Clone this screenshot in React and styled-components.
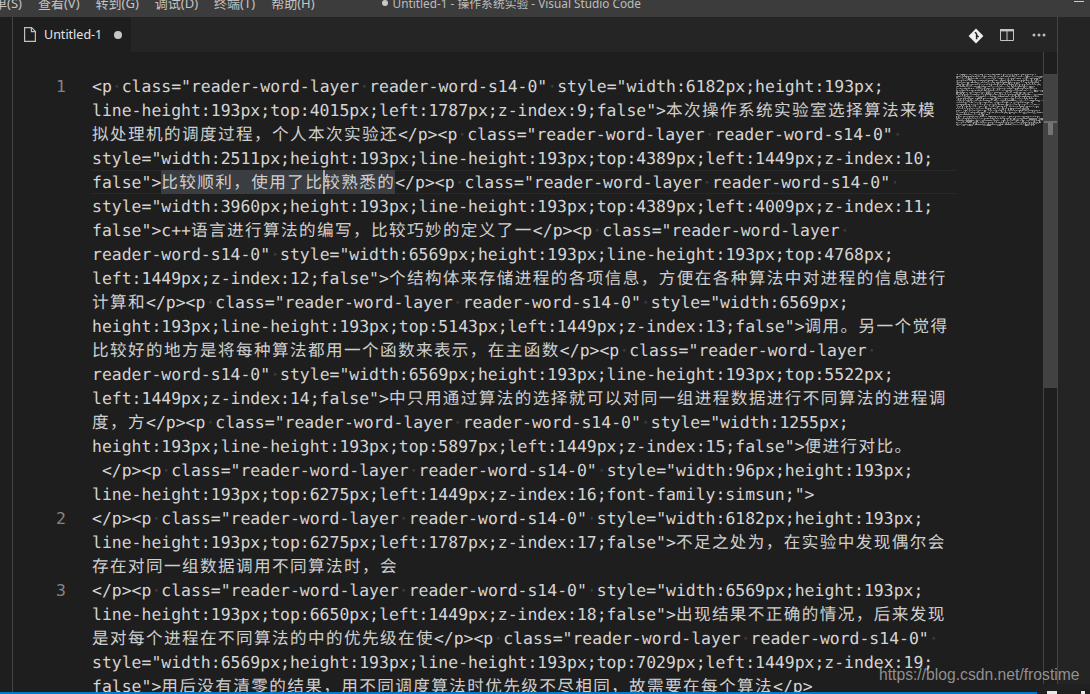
import React from "react";
import styled, { createGlobalStyle } from "styled-components";

const Global = createGlobalStyle`
  html, body { margin: 0; padding: 0; background: #1e1e1e; overflow: hidden; }
  #root { width: 1090px; height: 694px; }
`;

const CODE = [
  [1, `<p class="reader-word-layer reader-word-s14-0" style="width:6182px;height:193px;`],
  [0, `line-height:193px;top:4015px;left:1787px;z-index:9;false">本次操作系统实验室选择算法来模`],
  [0, `拟处理机的调度过程，个人本次实验还</p><p class="reader-word-layer reader-word-s14-0" `],
  [0, `style="width:2511px;height:193px;line-height:193px;top:4389px;left:1449px;z-index:10;`],
  [0, `false">§</p><p class="reader-word-layer reader-word-s14-0" `],
  [0, `style="width:3960px;height:193px;line-height:193px;top:4389px;left:4009px;z-index:11;`],
  [0, `false">c++语言进行算法的编写，比较巧妙的定义了一</p><p class="reader-word-layer `],
  [0, `reader-word-s14-0" style="width:6569px;height:193px;line-height:193px;top:4768px;`],
  [0, `left:1449px;z-index:12;false">个结构体来存储进程的各项信息，方便在各种算法中对进程的信息进行`],
  [0, `计算和</p><p class="reader-word-layer reader-word-s14-0" style="width:6569px;`],
  [0, `height:193px;line-height:193px;top:5143px;left:1449px;z-index:13;false">调用。另一个觉得`],
  [0, `比较好的地方是将每种算法都用一个函数来表示，在主函数</p><p class="reader-word-layer `],
  [0, `reader-word-s14-0" style="width:6569px;height:193px;line-height:193px;top:5522px;`],
  [0, `left:1449px;z-index:14;false">中只用通过算法的选择就可以对同一组进程数据进行不同算法的进程调`],
  [0, `度，方</p><p class="reader-word-layer reader-word-s14-0" style="width:1255px;`],
  [0, `height:193px;line-height:193px;top:5897px;left:1449px;z-index:15;false">便进行对比。`],
  [0, `\u00a0</p><p class="reader-word-layer reader-word-s14-0" style="width:96px;height:193px;`],
  [0, `line-height:193px;top:6275px;left:1449px;z-index:16;font-family:simsun;">`],
  [2, `</p><p class="reader-word-layer reader-word-s14-0" style="width:6182px;height:193px;`],
  [0, `line-height:193px;top:6275px;left:1787px;z-index:17;false">不足之处为，在实验中发现偶尔会`],
  [0, `存在对同一组数据调用不同算法时，会`],
  [3, `</p><p class="reader-word-layer reader-word-s14-0" style="width:6569px;height:193px;`],
  [0, `line-height:193px;top:6650px;left:1449px;z-index:18;false">出现结果不正确的情况，后来发现`],
  [0, `是对每个进程在不同算法的中的优先级在使</p><p class="reader-word-layer reader-word-s14-0" `],
  [0, `style="width:6569px;height:193px;line-height:193px;top:7029px;left:1449px;z-index:19;`],
  [0, `false">用后没有清零的结果，用不同调度算法时优先级不尽相同，故需要在每个算法</p>`],
];

const SELECT_A = "比较顺利，使用了比";
const SELECT_B = "较熟悉的";
const MENU = ["单(S)", "查看(V)", "转到(G)", "调试(D)", "终端(T)", "帮助(H)"];

const Root = styled.div`
  position: relative;
  width: 1090px;
  height: 694px;
  display: flex;
  flex-direction: column;
  overflow: hidden;
  background: #1e1e1e;
`;
const TitleBar = styled.div`
  height: 17px;
  flex: none;
  background: #3c3c3c;
  overflow: hidden;
`;
const TitleRow = styled.div`
  height: 5px;
  margin-left: -6px;
  display: flex;
  align-items: center;
  gap: 16px;
  color: #c4c4c4;
  font: 13px "Noto Sans", "Noto Sans CJK SC", sans-serif;
  white-space: nowrap;
`;
const WindowTitle = styled.span`
  margin-left: 51px;
  display: flex;
  align-items: center;
  gap: 5px;
  color: #bdbdbd;
  font-size: 11.8px;
`;
const TitleDot = styled.i`
  width: 6px;
  height: 6px;
  border-radius: 50%;
  background: #c8c8c8;
`;
const WindowControl = styled.span`
  position: absolute;
  right: 6px;
  top: 1px;
  width: 10px;
  height: 1px;
  background: #cccccc;
`;
const Main = styled.div`
  flex: 1;
  min-height: 0;
  display: flex;
`;
const LeftRail = styled.div`
  width: 12px;
  flex: none;
  background: #1e1e1e;
  border-right: 1px solid #444444;
`;
const EditorGroup = styled.div`
  width: 1044px;
  flex: none;
  display: flex;
  flex-direction: column;
  min-height: 0;
`;
const RightRail = styled.div`
  flex: 1;
  background: #242424;
  border-left: 1px solid #444444;
`;
const TabBar = styled.div`
  height: 35px;
  flex: none;
  display: flex;
  align-items: stretch;
  background: #252526;
`;
const Tab = styled.div`
  width: 118px;
  display: flex;
  align-items: center;
  padding-left: 11px;
  box-sizing: border-box;
  background: #1e1e1e;
  color: #e4e4e4;
  font: 12.5px "Noto Sans", sans-serif;
`;
const TabLabel = styled.span`
  margin-left: 8px;
`;
const DirtyDot = styled.span`
  width: 8px;
  height: 8px;
  border-radius: 50%;
  background: #c6c6c6;
  margin-left: 12px;
`;
const TabActions = styled.div`
  margin-left: auto;
  width: 96px;
  display: flex;
  align-items: center;
  padding-left: 7px;
  gap: 16px;
  box-sizing: border-box;
`;
const IconSlot = styled.span`
  display: flex;
  margin-top: ${(p) => p.$dy || 0}px;
  margin-left: ${(p) => p.$dx || 0}px;
`;
const Editor = styled.div`
  flex: 1;
  min-height: 0;
  display: flex;
  overflow: hidden;
`;
const Gutter = styled.div`
  width: 53px;
  flex: none;
  padding: 22px 26px 0 0;
  text-align: right;
  color: #858585;
  font: 16.44px/26px "DejaVu Sans Mono", monospace;
`;
const LineNo = styled.div`
  height: 24px;
`;
const Code = styled.div`
  width: 864px;
  flex: none;
  padding-top: 22px;
  color: #d4d4d4;
  font: 16.44px/26px "DejaVu Sans Mono", monospace;
  text-rendering: geometricPrecision;
`;
const Line = styled.div`
  height: 24px;
  white-space: pre;
  box-sizing: border-box;
  box-shadow: ${(p) => (p.$active ? "inset 0 1px 0 #282828, inset 0 -1px 0 #282828" : "none")};
`;
const Cjk = styled.span`
  font-family: "Noto Sans CJK SC", sans-serif;
  font-size: 16.6px;
  line-height: 0;
  letter-spacing: 1.4px;
  font-weight: 400;
  color: #cfcfcf;
`;
const Ws = styled.span`
  color: #3f3f3f;
`;
const Selection = styled.span`
  position: relative;
  display: inline-block;
  height: 24px;
  vertical-align: top;
  background: #3a3d41;
`;
const Caret = styled.i`
  position: absolute;
  top: 0;
  left: 162px;
  width: 2px;
  height: 24px;
  background: #aeafad;
`;
const Minimap = styled.div`
  width: 87px;
  flex: none;
  padding-top: 22px;
`;
const Scrollbar = styled.div`
  width: 13px;
  flex: none;
  border-left: 1px solid #444444;
  padding-top: 22px;
`;
const Thumb = styled.div`
  position: relative;
  height: 314px;
  background: #424242;
`;
const OverviewLine = styled.div`
  position: absolute;
  top: 47px;
  left: 0;
  right: 0;
  height: 2px;
  background: #6e6e6e;
`;
const OverviewCursor = styled.div`
  position: absolute;
  top: 49px;
  left: 4px;
  width: 5px;
  height: 12px;
  background: #747474;
`;
const StatusBar = styled.div`
  height: 2px;
  flex: none;
  background: #007acc;
`;
const Watermark = styled.div`
  position: absolute;
  left: 879px;
  top: 665px;
  color: rgba(190, 190, 190, 0.72);
  font: 15.7px/20px "Liberation Sans", sans-serif;
  white-space: nowrap;
`;
const CornerWidget = styled.div`
  position: absolute;
  right: 0;
  bottom: 0;
  width: 53px;
  height: 10px;
  background: #202020;
  border-top-left-radius: 4px;
`;
const CornerMark = styled.span`
  position: absolute;
  bottom: 0;
  left: ${(p) => p.$x}px;
  width: ${(p) => p.$w}px;
  height: 3px;
  background: #e8e8e8;
`;

function runs(text) {
  const parts = text.match(/[\u3000-\u9fff\uff00-\uffef]+| |[^ \u3000-\u9fff\uff00-\uffef]+/g) || [];
  return parts.map((p, i) => {
    if (p === " ") return <Ws key={i}>·</Ws>;
    if (/^[\u3000-\u9fff\uff00-\uffef]/.test(p)) return <Cjk key={i}>{p}</Cjk>;
    return <React.Fragment key={i}>{p}</React.Fragment>;
  });
}

function SelectedRun() {
  return (
    <Selection>
      <Cjk>{SELECT_A}</Cjk>
      <Caret />
      <Cjk>{SELECT_B}</Cjk>
    </Selection>
  );
}

function CodeLine({ text }) {
  if (!text.includes("§")) return <Line>{runs(text)}</Line>;
  const [a, b] = text.split("§");
  return (
    <Line $active>
      {runs(a)}
      <SelectedRun />
      {runs(b)}
    </Line>
  );
}

function MinimapArt() {
  const rects = [];
  CODE.forEach(([, raw], row) => {
    const text = raw.replace("§", SELECT_A + SELECT_B);
    let x = 0;
    for (let i = 0; i < text.length; i++) {
      const c = text.charCodeAt(i);
      const wide = c >= 0x3000;
      const w = wide ? 2 : 1;
      if (c !== 32 && c !== 160) {
        const seed = (c * 31 + i * 17 + row * 13) % 97;
        const v = 55 + (seed % 110);
        rects.push(
          <rect key={`${row}-${i}`} x={x} y={row * 2} width={w} height={seed % 3 === 0 ? 2 : 1}
            fill={`rgb(${v},${v},${v})`} />
        );
      }
      x += w;
    }
  });
  return (
    <svg width="87" height="52" viewBox="0 0 87 52" shapeRendering="crispEdges" style={{ display: "block" }}>
      {rects}
    </svg>
  );
}

const FileIcon = () => (
  <svg width="12" height="15" viewBox="0 0 12 15" fill="none" stroke="#c0c0c0" strokeWidth="1.2">
    <path d="M.6.6h7l3.8 3.8v10H.6z" />
    <path d="M7.4.6v4h4" />
  </svg>
);

const GitIcon = () => (
  <svg width="16" height="16" viewBox="0 0 16 16">
    <path d="M8 .6 15.4 8 8 15.4.6 8z" fill="#f0f0f0" />
    <path d="M7 4.2 8.6 5.8M8.6 5.8v5.4M8.6 7.4l2 1.4" stroke="#252526" strokeWidth="1.5" fill="none" />
  </svg>
);

const SplitIcon = () => (
  <svg width="14" height="14" viewBox="0 0 14 14" fill="none">
    <path d="M.5 1.5h13v11H.5z" stroke="#c4c4c4" />
    <path d="M0 1h14v2.4H0z" fill="#c4c4c4" />
    <path d="M7 3v9.5" stroke="#c4c4c4" />
  </svg>
);

const MoreIcon = () => (
  <svg width="14" height="14" viewBox="0 0 14 14" fill="#bdbdbd">
    <circle cx="2" cy="7" r="1.5" />
    <circle cx="7" cy="7" r="1.5" />
    <circle cx="12" cy="7" r="1.5" />
  </svg>
);

export default function App() {
  return (
    <Root>
      <Global />
      <TitleBar>
        <TitleRow>
          {MENU.map((m) => (
            <span key={m}>{m}</span>
          ))}
          <WindowTitle>
            <TitleDot />
            Untitled-1 - 操作系统实验 - Visual Studio Code
          </WindowTitle>
        </TitleRow>
        <WindowControl />
      </TitleBar>
      <Main>
        <LeftRail />
        <EditorGroup>
          <TabBar>
            <Tab>
              <FileIcon />
              <TabLabel>Untitled-1</TabLabel>
              <DirtyDot />
            </Tab>
            <TabActions>
              <IconSlot $dy={2}><GitIcon /></IconSlot>
              <IconSlot $dy={1}><SplitIcon /></IconSlot>
              <IconSlot $dx={2}><MoreIcon /></IconSlot>
            </TabActions>
          </TabBar>
          <Editor>
            <Gutter>
              {CODE.map(([n], i) => (
                <LineNo key={i}>{n || ""}</LineNo>
              ))}
            </Gutter>
            <Code>
              {CODE.map(([, t], i) => (
                <CodeLine key={i} text={t} />
              ))}
            </Code>
            <Minimap>
              <MinimapArt />
            </Minimap>
            <Scrollbar>
              <Thumb>
                <OverviewLine />
                <OverviewCursor />
              </Thumb>
            </Scrollbar>
          </Editor>
        </EditorGroup>
        <RightRail />
      </Main>
      <StatusBar />
      <Watermark>https://blog.csdn.net/frostime</Watermark>
      <CornerWidget>
        <CornerMark $x={10} $w={10} />
        <CornerMark $x={44} $w={4} />
      </CornerWidget>
    </Root>
  );
}
